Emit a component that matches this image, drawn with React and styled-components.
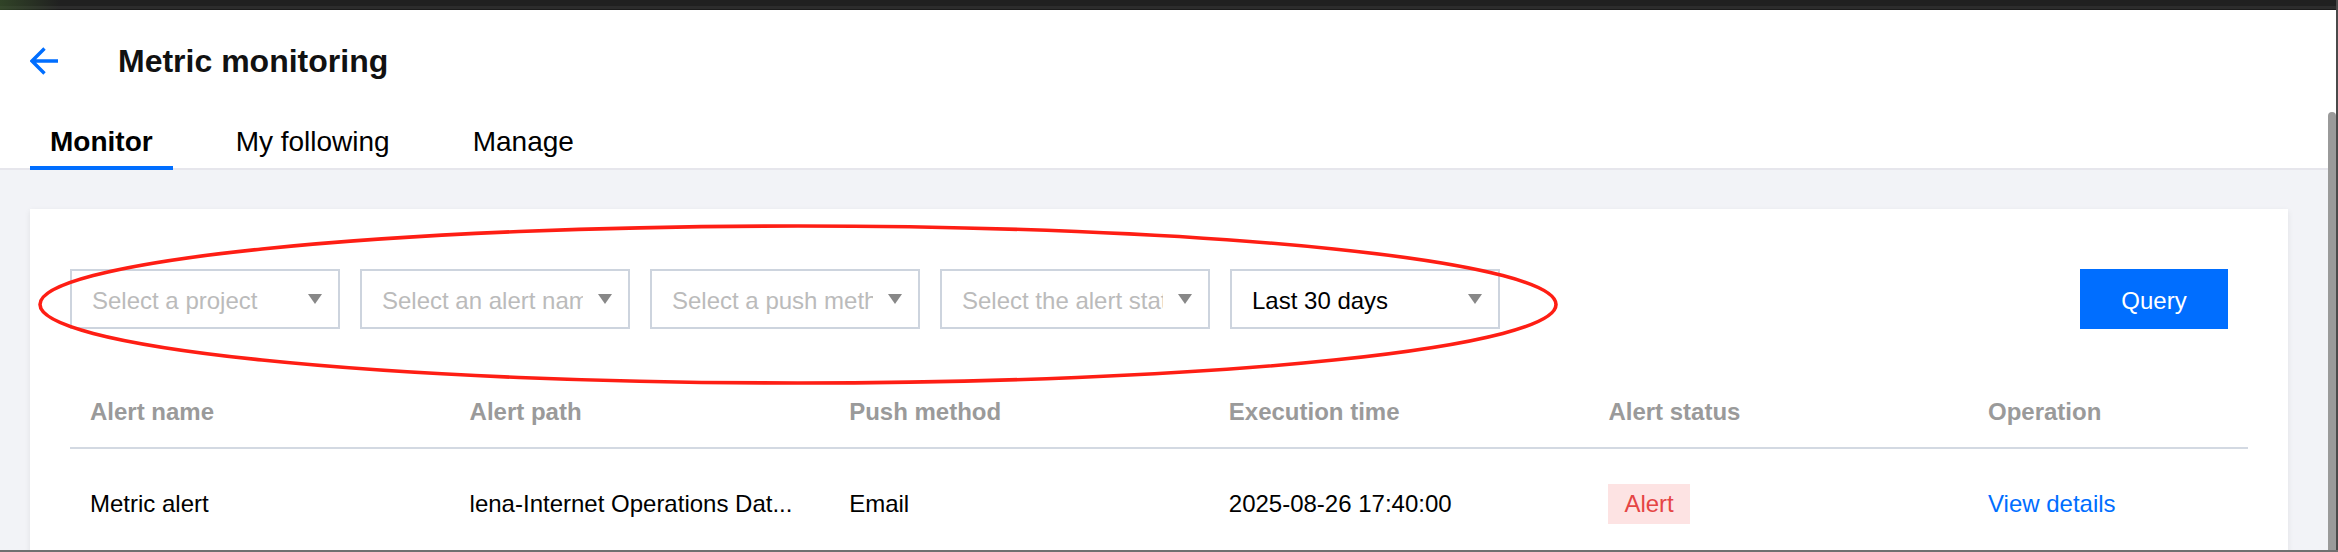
import React from "react";
import styled, { createGlobalStyle } from "styled-components";

const GlobalStyle = createGlobalStyle`
  html, body { margin: 0; padding: 0; }
  body {
    width: 2338px;
    height: 552px;
    overflow: hidden;
    background: #f2f3f7;
    font-family: "Liberation Sans", Arial, Helvetica, sans-serif;
  }
  * { box-sizing: border-box; }
`;

const Page = styled.div`
  position: relative;
  width: 2338px;
  height: 552px;
  overflow: hidden;
  display: flex;
  flex-direction: column;
  background: #f2f3f7;
`;

const TopBar = styled.div`
  height: 10px;
  flex: none;
  background:
    linear-gradient(90deg, rgba(62, 96, 44, 0.55) 0, rgba(32, 32, 32, 0) 60px),
    linear-gradient(#202020 0 6px, #2c2c2c 6px 9px, #1c1c1c 9px);
`;

const Header = styled.header`
  flex: none;
  background: #fff;
  padding-top: 31px;
`;

const TitleRow = styled.div`
  display: flex;
  align-items: center;
  height: 40px;
  padding-left: 30px;
  gap: 60px;
`;

const BackButton = styled.button`
  display: flex;
  align-items: center;
  padding: 0;
  border: none;
  background: none;
  color: #006eff;
  cursor: pointer;
`;

const Title = styled.h1`
  margin: 0;
  font-size: 32px;
  line-height: 40px;
  font-weight: 700;
  color: #111;
`;

const TabBar = styled.nav`
  display: flex;
  gap: 43px;
  margin-top: 39px;
  padding-left: 30px;
  box-shadow: inset 0 -2px 0 #e6e6ec;
`;

const Tab = styled.div`
  padding: 2px 20px 4px;
  line-height: 40px;
  font-size: 28px;
  color: #000;
  font-weight: ${(p) => (p.$active ? 700 : 400)};
  border-bottom: 4px solid ${(p) => (p.$active ? "#006eff" : "transparent")};
`;

const Main = styled.main`
  flex: 1;
  padding: 39px 50px 0 30px;
`;

const Card = styled.section`
  background: #fff;
  padding: 60px 40px 40px;
  box-shadow: 0 2px 6px rgba(0, 0, 0, 0.08);
`;

const FilterBar = styled.div`
  display: flex;
  align-items: center;
  gap: 20px;
`;

const SelectBox = styled.div`
  width: 270px;
  height: 60px;
  border: 2px solid #cdd4de;
  display: flex;
  align-items: center;
  gap: 15px;
  padding: 0 16px 0 20px;
  background: #fff;
`;

const SelectText = styled.span`
  flex: 1;
  min-width: 0;
  padding-top: 3px;
  font-size: 24px;
  line-height: 40px;
  white-space: nowrap;
  overflow: hidden;
  color: ${(p) => (p.$placeholder ? "#bbbbbb" : "#000")};
`;

const Caret = styled.span`
  flex: none;
  width: 0;
  height: 0;
  border-left: 7.5px solid transparent;
  border-right: 7.5px solid transparent;
  border-top: 10px solid #888;
`;

const QueryButton = styled.button`
  margin-left: auto;
  margin-right: 20px;
  width: 148px;
  height: 60px;
  padding: 3px 0 0;
  border: none;
  background: #006eff;
  color: #fff;
  font-family: inherit;
  font-size: 24px;
  cursor: pointer;
`;

const Table = styled.div`
  margin-top: 42px;
`;

const HeaderRow = styled.div`
  display: grid;
  grid-template-columns: repeat(5, 379.6px) 1fr;
  align-items: center;
  height: 78px;
  border-bottom: 2px solid #d3d9e2;
`;

const HeadCell = styled.div`
  padding: 6px 0 0 20px;
  font-size: 24px;
  line-height: 40px;
  font-weight: 700;
  color: #9a9a9a;
  white-space: nowrap;
`;

const BodyRow = styled.div`
  display: grid;
  grid-template-columns: repeat(5, 379.6px) 1fr;
  align-items: center;
  padding: 35px 0 33px;
`;

const Cell = styled.div`
  padding-left: 20px;
  font-size: 24px;
  line-height: 40px;
  color: #000;
  white-space: nowrap;
  overflow: hidden;
`;

const Badge = styled.span`
  display: inline-block;
  padding: 0 16px;
  line-height: 40px;
  background: #fde3e3;
  color: #e54545;
`;

const Link = styled.a`
  color: #006eff;
  text-decoration: none;
  cursor: pointer;
`;

const Annotation = styled.svg`
  position: absolute;
  left: 0;
  top: 0;
  pointer-events: none;
`;

const ScrollThumb = styled.div`
  position: absolute;
  left: 2328px;
  top: 112px;
  width: 8px;
  height: 460px;
  background: #9a9a9a;
  border-radius: 4px 4px 0 0;
`;

const WindowEdgeRight = styled.div`
  position: absolute;
  right: 0;
  top: 0;
  width: 2px;
  height: 552px;
  background: #4a4a4a;
`;

const WindowEdgeBottom = styled.div`
  position: absolute;
  left: 0;
  bottom: 0;
  width: 100%;
  height: 2px;
  background: #707070;
`;

const filters = [
  { label: "Select a project", placeholder: true },
  { label: "Select an alert name", placeholder: true },
  { label: "Select a push method", placeholder: true },
  { label: "Select the alert status", placeholder: true },
  { label: "Last 30 days", placeholder: false },
];

const columns = ["Alert name", "Alert path", "Push method", "Execution time", "Alert status", "Operation"];

export default function App() {
  return (
    <>
      <GlobalStyle />
      <Page>
        <TopBar />
        <Header>
          <TitleRow>
            <BackButton aria-label="Back">
              <svg width="28" height="28" viewBox="0 0 28 28" fill="none">
                <path d="M14.5 1.5 L2 14 L14.5 26.5 M2 14 H28" stroke="currentColor" strokeWidth="3.4" />
              </svg>
            </BackButton>
            <Title>Metric monitoring</Title>
          </TitleRow>
          <TabBar>
            <Tab $active>Monitor</Tab>
            <Tab>My following</Tab>
            <Tab>Manage</Tab>
          </TabBar>
        </Header>
        <Main>
          <Card>
            <FilterBar>
              {filters.map((f) => (
                <SelectBox key={f.label}>
                  <SelectText $placeholder={f.placeholder}>{f.label}</SelectText>
                  <Caret />
                </SelectBox>
              ))}
              <QueryButton>Query</QueryButton>
            </FilterBar>
            <Table>
              <HeaderRow>
                {columns.map((c) => (
                  <HeadCell key={c}>{c}</HeadCell>
                ))}
              </HeaderRow>
              <BodyRow>
                <Cell>Metric alert</Cell>
                <Cell>lena-Internet Operations Dat...</Cell>
                <Cell>Email</Cell>
                <Cell>2025-08-26 17:40:00</Cell>
                <Cell>
                  <Badge>Alert</Badge>
                </Cell>
                <Cell>
                  <Link>View details</Link>
                </Cell>
              </BodyRow>
            </Table>
          </Card>
        </Main>
        <Annotation width="2338" height="552" viewBox="0 0 2338 552">
          <ellipse cx="798" cy="304.5" rx="758" ry="78.5" fill="none" stroke="#fe1e14" strokeWidth="3.6" />
        </Annotation>
        <ScrollThumb />
        <WindowEdgeRight />
        <WindowEdgeBottom />
      </Page>
    </>
  );
}
